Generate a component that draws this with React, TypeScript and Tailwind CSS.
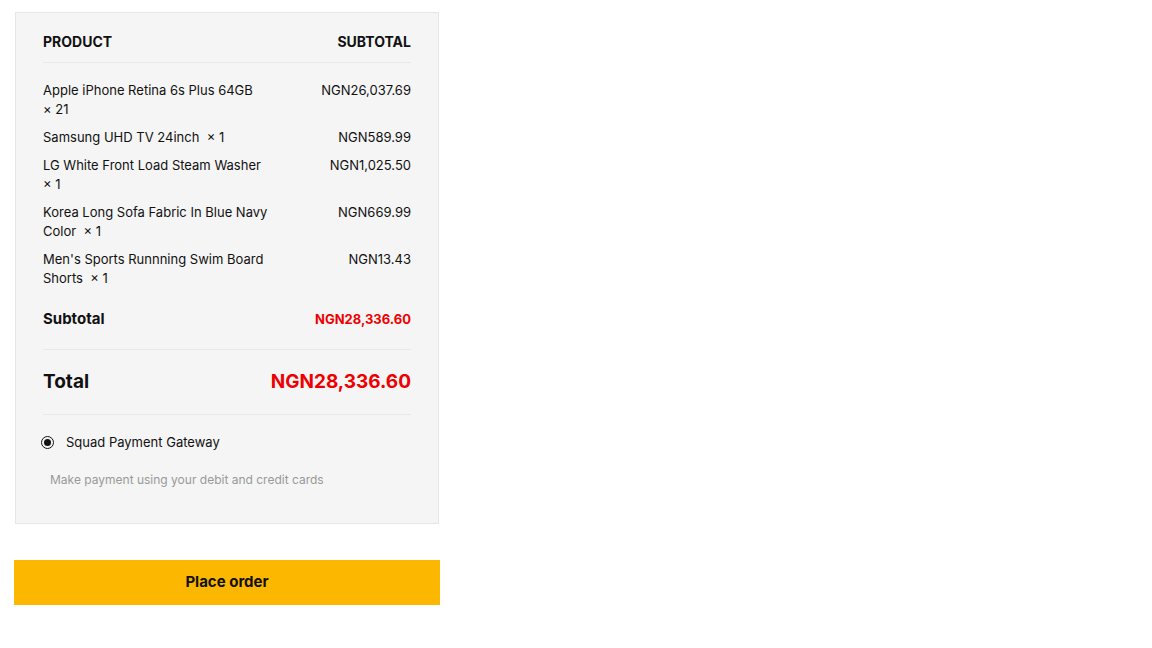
import React from "react";

const items = [
  { name: "Apple iPhone Retina 6s Plus 64GB", qty: "×\u00a021", price: "NGN26,037.69" },
  { name: "Samsung UHD TV 24inch", qty: "×\u00a01", price: "NGN589.99" },
  { name: "LG White Front Load Steam Washer", qty: "×\u00a01", price: "NGN1,025.50" },
  { name: "Korea Long Sofa Fabric In Blue Navy Color", qty: "×\u00a01", price: "NGN669.99" },
  { name: "Men's Sports Runnning Swim Board Shorts", qty: "×\u00a01", price: "NGN13.43" },
];

export default function App() {
  return (
    <div
      className="min-h-[648px] w-[1152px] bg-white pt-[12px] pl-[14px] text-[#111]"
      style={{ fontFamily: 'Inter, "Open Sans", "Liberation Sans", sans-serif' }}
    >
      <div className="w-[426px]">
        <div className="mx-px border border-[#e6e6e6] bg-[#f5f5f5] px-[27px] pt-[19px] pb-[33px]">
          <div className="flex items-center justify-between border-b border-[#e8e8e8] pb-[10px] text-[14px] font-bold uppercase leading-[20px]">
            <span>Product</span>
            <span>Subtotal</span>
          </div>
          <div className="flex flex-col gap-[9px] pt-[18px] text-[13px] leading-[19px]">
            {items.map((it) => (
              <div key={it.name} className="flex justify-between">
                <span className="w-[232px]">{it.name + "\u00a0 " + it.qty}</span>
                <span>{it.price}</span>
              </div>
            ))}
          </div>
          <div className="flex items-center justify-between border-b border-[#e8e8e8] pt-[21px] pb-[20px]">
            <span className="text-[15px] font-bold leading-[20px]">Subtotal</span>
            <span className="text-[13px] font-bold leading-[20px] text-[#ee0000]">NGN28,336.60</span>
          </div>
          <div className="flex items-center justify-between border-b border-[#e8e8e8] pt-[19px] pb-[19px]">
            <span className="text-[19px] font-bold leading-[26px]">Total</span>
            <span className="text-[19px] font-bold leading-[26px] text-[#ee0000]">NGN28,336.60</span>
          </div>
          <div className="flex items-center gap-[12px] pt-[17px]">
            <span className="-ml-[2px] flex h-[13px] w-[13px] items-center justify-center rounded-full border-[1.5px] border-[#111]">
              <span className="h-[7px] w-[7px] rounded-full bg-[#111]" />
            </span>
            <span className="text-[13px] leading-[20px]">Squad Payment Gateway</span>
          </div>
          <div className="pt-[18px] pl-[7px] text-[12px] leading-[20px] text-[#999]">
            Make payment using your debit and credit cards
          </div>
        </div>
        <button className="mt-[36px] flex h-[45px] w-[426px] items-center justify-center bg-[#fcb800] text-[15px] font-bold text-[#111]">
          Place order
        </button>
      </div>
    </div>
  );
}
